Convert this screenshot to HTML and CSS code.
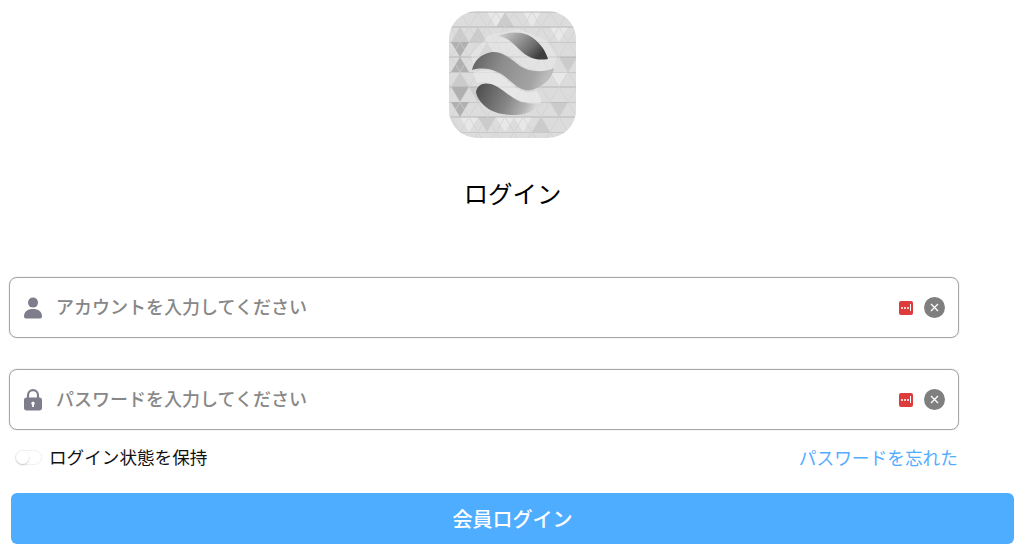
FILE: index.html
```html
<!DOCTYPE html>
<html lang="ja">
<head>
    <meta charset="UTF-8">
    <meta name="viewport" content="width=device-width, initial-scale=1.0">
    <title>ログイン</title>
    <link rel="stylesheet" href="styles.css">
</head>
<body>

    <div class="logo">
        <svg width="127" height="127" viewBox="0 0 127 127">
            <defs>
                <clipPath id="logoClip"><rect width="127" height="127" rx="28"/></clipPath>
                <pattern id="mesh" width="18" height="30" patternUnits="userSpaceOnUse" patternTransform="translate(-7 1)">
                    <path d="M0 0H18M0 15H18" stroke="#b2b2b2" stroke-width="0.9"/>
                    <path d="M0 0L9 15L18 0M0 30L9 15L18 30" stroke="#cfcfcf" stroke-width="0.7" fill="none"/>
                </pattern>
                <linearGradient id="band1" x1="0" y1="0" x2="1" y2="0.5">
                    <stop offset="0" stop-color="#d8d8d8"/>
                    <stop offset="0.35" stop-color="#a4a4a4"/>
                    <stop offset="0.75" stop-color="#6e6e6e"/>
                    <stop offset="1" stop-color="#3e3e3e"/>
                </linearGradient>
                <linearGradient id="band2" x1="0" y1="0" x2="1" y2="0.2">
                    <stop offset="0" stop-color="#5c5c5c"/>
                    <stop offset="0.4" stop-color="#8c8c8c"/>
                    <stop offset="0.85" stop-color="#a4a4a4"/>
                    <stop offset="1" stop-color="#bcbcbc"/>
                </linearGradient>
                <linearGradient id="band3" x1="0" y1="0" x2="1" y2="0.2">
                    <stop offset="0" stop-color="#4a4a4a"/>
                    <stop offset="0.55" stop-color="#858585"/>
                    <stop offset="0.85" stop-color="#b4b4b4"/>
                    <stop offset="1" stop-color="#d8d8d8"/>
                </linearGradient>
            </defs>
            <g clip-path="url(#logoClip)">
                <rect width="127" height="127" fill="#dcdcdc"/>
                <!-- darker tiles on the left side -->
                <path d="M2 31L20 31L11 46ZM11 46L20 61L2 61ZM2 76L20 76L11 91ZM2 91L20 91L11 106Z" fill="#b0b0b0"/>
                <path d="M2 31L20 31L11 16ZM20 31L38 31L29 16ZM29 46L47 46L38 31ZM2 76L20 76L11 61ZM20 76L38 76L29 91ZM29 106L47 106L38 121ZM47 16L65 16L56 1ZM83 121L101 121L92 106ZM110 46L128 46L119 61ZM101 91L119 91L110 106Z" fill="#cbcbcb"/>
                <path d="M38 1L56 1L47 16ZM74 1L92 1L83 16ZM101 16L119 16L110 31ZM65 106L83 106L74 121ZM101 61L119 61L110 76ZM11 106L29 106L20 121ZM47 106L65 106L56 121Z" fill="#e8e8e8"/>
                <rect width="127" height="127" fill="url(#mesh)"/>
                <!-- pale sphere behind the bands -->
                <path d="M25 60C34 47 47 37 62 46C72 52 76 60 94 60C99 60 103 59 106 57L108 46L98 30L70 18L40 24L22 44Z" fill="#f0f0f0" opacity="0.35"/>
                <path d="M24 62C40 56 50 62 60 71C68 78 76 84 88 80C94 90 92 92 92 92C80 94 70 90 60 84C50 76 40 70 28 72Z" fill="#eeeeee" opacity="0.6"/>
                <path d="M49 25C57 21 70 20 79 24C89 29 96 38 99 48C88 50 79 47 71 39C64 32 58 26 49 25Z" fill="url(#band1)"/>
                <path d="M23 59C25 50 31 43 43 41C53 40 62 48 71 55C80 61 94 62 105 57C104 64 98 74 83 79C74 81 67 75 59 68C50 60 38 55 23 59Z" fill="url(#band2)"/>
                <path d="M27 81C28 74 34 71 42 73C52 76 60 86 72 91C80 93 88 93 94 92C88 99 76 104 66 104C55 104 44 102 37 96C32 92 28 87 27 81Z" fill="url(#band3)"/>
            </g>
        </svg>
    </div>

    <h1 class="title">ログイン</h1>

    <form class="login-form">
        <div class="field">
            <svg class="field-icon" width="18" height="22" viewBox="0 0 18 22">
                <circle cx="9" cy="5.6" r="5"/>
                <path d="M0 19.5C0 14.5 3.5 12 9 12C14.5 12 18 14.5 18 19.5C18 20.8 17.2 21.5 16 21.5H2C.8 21.5 0 20.8 0 19.5Z"/>
            </svg>
            <span class="placeholder">アカウントを入力してください</span>
            <span class="key-badge"><i></i><i></i><i></i><b></b></span>
            <span class="clear">
                <svg width="9" height="9" viewBox="0 0 9 9"><path d="M1 1L8 8M8 1L1 8"/></svg>
            </span>
        </div>

        <div class="field">
            <svg class="field-icon" width="18" height="22" viewBox="0 0 18 22">
                <path d="M4 10V6.5C4 3.5 6 1.2 9 1.2C12 1.2 14 3.5 14 6.5V10" fill="none" stroke="#7d7d8b" stroke-width="2.2"/>
                <path fill-rule="evenodd" d="M2.5 8.5H15.5C17 8.5 18 9.500 18 11V19C18 20.5 17 21.5 15.5 21.5H2.5C1 21.5 0 20.5 0 19V11C0 9.5 1 8.5 2.5 8.5ZM9 12.8C8 12.8 7.3 13.5 7.3 14.4C7.3 15 7.6 15.5 8.1 15.8V18H9.9V15.8C10.4 15.5 10.7 15 10.7 14.4C10.7 13.5 10 12.8 9 12.8Z"/>
            </svg>
            <span class="placeholder">パスワードを入力してください</span>
            <span class="key-badge"><i></i><i></i><i></i><b></b></span>
            <span class="clear">
                <svg width="9" height="9" viewBox="0 0 9 9"><path d="M1 1L8 8M8 1L1 8"/></svg>
            </span>
        </div>

        <div class="options">
            <label class="remember">
                <span class="toggle"><span class="knob"></span></span>
                ログイン状態を保持
            </label>
            <a class="forgot" href="#">パスワードを忘れた</a>
        </div>

        <button class="submit" type="button">会員ログイン</button>
    </form>

</body>
</html>
```

FILE: styles.css
```css
/* login page */
body {
    margin: 0;
    background: #ffffff;
    font-family: "Noto Sans CJK JP", "Noto Sans", sans-serif;
    color: #000000;
    overflow: hidden;
}
.logo {
    display: flex;
    justify-content: center;
    padding-top: 11px;
    padding-left: 1px;
    height: 127px;
}
.logo svg {
    display: block;
    filter: blur(0.5px);
}
.title {
    margin: 37px 0 0;
    height: 36px;
    line-height: 36px;
    font-size: 24.4px;
    font-weight: 400;
    text-align: center;
    padding-left: 1px;
}
.login-form {
    margin-top: 66px;
    padding-left: 9px;
}
.field {
    display: flex;
    align-items: center;
    box-sizing: border-box;
    width: 950px;
    height: 61px;
    margin-bottom: 31px;
    padding: 0 13px 0 14px;
    border: 1px solid #a6a6a6;
    border-radius: 8px;
    box-shadow: 0 0 1px rgba(0, 0, 0, 0.4);
}
.field-icon {
    flex: none;
    margin-top: 1px;
    fill: #7d7d8b;
}
.placeholder {
    flex: 1;
    margin-left: 14px;
    padding-bottom: 3px;
    font-size: 18px;
    font-weight: 500;
    color: #878787;
}
.key-badge {
    display: flex;
    align-items: center;
    justify-content: center;
    gap: 1px;
    width: 14px;
    height: 14px;
    border-radius: 2px;
    background: #de3c3c;
    margin-right: 11px;
}
.key-badge i {
    width: 2px;
    height: 2px;
    border-radius: 50%;
    background: #ffffff;
}
.key-badge b {
    width: 1px;
    height: 7px;
    background: #ffffff;
}
.clear {
    display: flex;
    align-items: center;
    justify-content: center;
    width: 21px;
    height: 21px;
    border-radius: 50%;
    background: #7f7f7f;
}
.clear svg {
    stroke: #ffffff;
    stroke-width: 1.3;
    fill: none;
}
.options {
    display: flex;
    justify-content: space-between;
    align-items: center;
    width: 949px;
    height: 26px;
    margin-top: -18px;
}
.remember {
    display: flex;
    align-items: center;
    gap: 7px;
    padding-left: 6px;
    font-size: 17.6px;
    color: #111111;
}
.toggle {
    display: block;
    box-sizing: border-box;
    width: 27px;
    height: 15px;
    margin-top: 2px;
    border: 1px solid #f0f0f0;
    border-radius: 8px;
    background: #ffffff;
}
.knob {
    display: block;
    width: 13px;
    height: 13px;
    border-radius: 50%;
    background: #ffffff;
    box-shadow: 0 1px 2px rgba(0, 0, 0, 0.2);
}
.forgot {
    margin-top: 2px;
    font-size: 17.7px;
    color: #52adff;
    text-decoration: none;
}
.submit {
    display: block;
    width: 1003px;
    height: 51px;
    margin: 24px 0 0 2px;
    border: none;
    border-radius: 6px;
    background: #4fadff;
    color: #ffffff;
    font-family: inherit;
    font-size: 20px;
    font-weight: 500;
}
```
